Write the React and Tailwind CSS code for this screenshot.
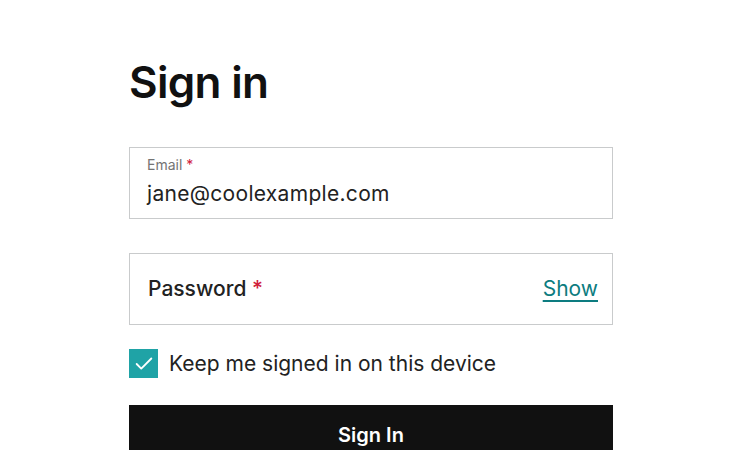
import { Check } from 'lucide-react';

const font = { fontFamily: 'Inter, "Noto Sans", sans-serif' };

export default function App() {
    return (
        <div className="w-[750px] h-[450px] overflow-hidden bg-white text-[#111]" style={font}>
            <div className="ml-[129px] w-[484px] pt-[60px] flex flex-col">
                <h1 className="text-[44px] leading-none font-semibold tracking-[-0.7px]">Sign in</h1>

                {/* Email field with floating label */}
                <div className="mt-[43px] h-[72px] border border-[#c9cbcc] px-[17px] pt-[10px]">
                    <div className="text-[14px] leading-[14px] text-[#747474]">
                        Email <span className="text-[#d0203a]">*</span>
                    </div>
                    <div className="mt-[11px] text-[21px] leading-[21px] tracking-[0.3px] text-[#222]">jane@coolexample.com</div>
                </div>

                {/* Password field */}
                <div className="mt-[34px] h-[72px] border border-[#c9cbcc] pl-[18px] pr-[14px] flex items-center justify-between">
                    <div className="text-[21px] font-medium text-[#222]">
                        Password <span className="text-[#d0203a]">*</span>
                    </div>
                    <span className="text-[21px] text-[#0d7c80] underline underline-offset-[4px] decoration-[2px]">Show</span>
                </div>

                <div className="mt-[23px] flex items-center gap-[11px]">
                    <div className="w-[29px] h-[29px] bg-[#1fa3a6] flex items-center justify-center">
                        <Check size={22} strokeWidth={2} className="text-white" />
                    </div>
                    <span className="text-[21px] text-[#222]">Keep me signed in on this device</span>
                </div>

                <button className="mt-[25px] h-[60px] bg-[#111] text-white text-[20px] font-semibold flex items-start justify-center pt-[15px]">
                    Sign In
                </button>
            </div>
        </div>
    );
}
